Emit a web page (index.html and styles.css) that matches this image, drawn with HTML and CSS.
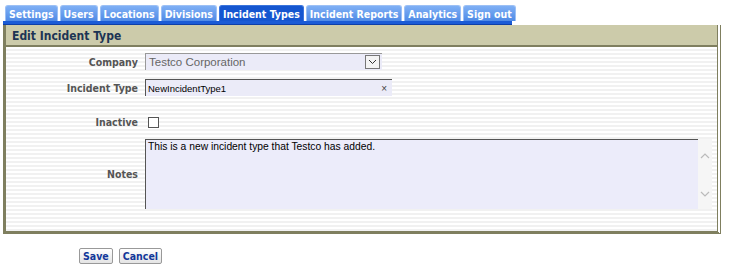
FILE: index.html
```html
<!DOCTYPE html>
<html lang="en">
<head>
    <meta charset="UTF-8">
    <title>Edit Incident Type</title>
    <link rel="stylesheet" href="styles.css">
</head>
<body>

    <!-- Top navigation tabs -->
    <div class="tabs">
        <a class="tab" href="#">Settings</a>
        <a class="tab" href="#">Users</a>
        <a class="tab" href="#">Locations</a>
        <a class="tab" href="#">Divisions</a>
        <a class="tab active" href="#">Incident Types</a>
        <a class="tab" href="#">Incident Reports</a>
        <a class="tab" href="#">Analytics</a>
        <a class="tab" href="#">Sign out</a>
    </div>
    <div class="tab-line"></div>

    <div class="panel">
        <div class="panel-head">Edit Incident Type</div>
        <div class="panel-body">
            <div class="row">
                <label class="lbl">Company</label>
                <div class="select">
                    <span>Testco Corporation</span>
                    <span class="drop">
                        <svg width="9" height="6" viewBox="0 0 9 6"><path d="M1 1 L4.5 4.5 L8 1" fill="none" stroke="#333" stroke-width="1"/></svg>
                    </span>
                </div>
            </div>
            <div class="row">
                <label class="lbl">Incident Type</label>
                <div class="text">
                    <span>NewIncidentType1</span>
                    <span class="clear">&times;</span>
                </div>
            </div>
            <div class="row row-check">
                <label class="lbl">Inactive</label>
                <span class="check"></span>
            </div>
            <div class="row">
                <label class="lbl">Notes</label>
                <div class="notes">
                    <div class="notes-text">This is a new incident type that Testco has added.</div>
                    <div class="scroll">
                        <svg width="10" height="6" viewBox="0 0 10 6"><path d="M1 5 L5 1 L9 5" fill="none" stroke="#bbb" stroke-width="1.2"/></svg>
                        <svg width="10" height="6" viewBox="0 0 10 6"><path d="M1 1 L5 5 L9 1" fill="none" stroke="#bbb" stroke-width="1.2"/></svg>
                    </div>
                </div>
            </div>
        </div>
    </div>

    <div class="actions">
        <button>Save</button>
        <button>Cancel</button>
    </div>

</body>
</html>
```

FILE: styles.css
```css
body {
    font-family: "Liberation Sans", Arial, sans-serif;
    font-size: 11px;
    background-color: white;
    margin: 0;
    padding: 5px 0 0 3px;
}

/* Tabs */
.tabs {
    display: flex;
    gap: 2px;
    padding-left: 2px;
    height: 16px;
}

.tab {
    display: block;
    height: 16px;
    line-height: 17px;
    padding: 0 3px;
    background: linear-gradient(#7fb0f5, #4f8ae6);
    border: 1px solid #9cc0f5;
    border-bottom: none;
    border-radius: 3px 3px 0 0;
    color: white;
    font-family: "DejaVu Sans Condensed", "DejaVu Sans", sans-serif;
    font-stretch: condensed;
    font-size: 10.5px;
    font-weight: bold;
    text-decoration: none;
    box-sizing: border-box;
}

.tab.active {
    background: #1556d0;
    border-color: #3a74dc;
}

.tab-line {
    width: 509px;
    height: 4px;
    background: #1a5bd6;
    border-bottom: 1px solid #0e3fa8;
    box-sizing: border-box;
}

/* Panel */
.panel {
    width: 718px;
    border-left: 3px solid #7f7f5f;
    border-right: 4px double #7f7f5f;
    border-bottom: 3px solid #7f7f5f;
    box-sizing: border-box;
}

.panel-head {
    height: 22px;
    line-height: 23px;
    padding-left: 6px;
    background: #cccbaa;
    border-bottom: 2px solid #7f7f5f;
    color: #1c3454;
    font-family: "DejaVu Sans Condensed", "DejaVu Sans", sans-serif;
    font-stretch: condensed;
    font-size: 12px;
    font-weight: bold;
    box-sizing: border-box;
}

.panel-body {
    height: 184px;
    padding-top: 6px;
    box-sizing: border-box;
    background: repeating-linear-gradient(#ffffff 0 2px, #f1f1f1 2px 4px);
}

.row {
    display: flex;
    align-items: center;
    margin-bottom: 9px;
}

.row-check {
    margin: 20px 0 11px;
}

.lbl {
    width: 132px;
    padding-right: 7px;
    text-align: right;
    font-family: "DejaVu Sans Condensed", "DejaVu Sans", sans-serif;
    font-stretch: condensed;
    font-size: 10.5px;
    font-weight: bold;
    color: #555;
}

.select {
    display: flex;
    justify-content: space-between;
    align-items: center;
    width: 237px;
    height: 17px;
    padding-left: 3px;
    background: #ebebf8;
    border-left: 1px solid #999;
    border-top: 1px solid #999;
    color: #666;
    font-size: 11.5px;
    box-sizing: border-box;
}

.drop {
    display: flex;
    align-items: center;
    justify-content: center;
    width: 13px;
    height: 12px;
    margin-right: 2px;
    border: 1px solid #777;
    background: #f4f4f4;
}

.text {
    display: flex;
    justify-content: space-between;
    align-items: center;
    width: 247px;
    height: 17px;
    padding-left: 2px;
    background: #ebebf8;
    border-left: 1px solid #555;
    border-top: 1px solid #555;
    color: black;
    font-size: 9.5px;
    box-sizing: border-box;
}

.clear {
    margin-right: 5px;
    font-size: 10px;
    color: #444;
}

.check {
    display: block;
    width: 9px;
    height: 9px;
    margin-left: 3px;
    border: 1px solid #555;
    background: white;
}

.notes {
    display: flex;
    width: 567px;
    height: 70px;
}

.notes-text {
    flex: 1;
    padding: 1px 2px;
    background: #ececfa;
    border-left: 1px solid #555;
    border-top: 1px solid #555;
    color: black;
    font-size: 10.3px;
}

.scroll {
    width: 14px;
    display: flex;
    flex-direction: column;
    justify-content: space-between;
    align-items: center;
    padding: 14px 0 12px;
    background: #f6f6f6;
    box-sizing: border-box;
}

/* Buttons */
.actions {
    display: flex;
    gap: 6px;
    padding: 14px 0 0 76px;
}

button {
    font-family: "DejaVu Sans Condensed", "DejaVu Sans", sans-serif;
    font-stretch: condensed;
    font-size: 10.5px;
    font-weight: bold;
    color: #12379a;
    height: 16px;
    padding: 0 3px;
    background: linear-gradient(#ffffff, #e4e4e4);
    border: 1px solid #999;
    border-radius: 2px;
}
```
